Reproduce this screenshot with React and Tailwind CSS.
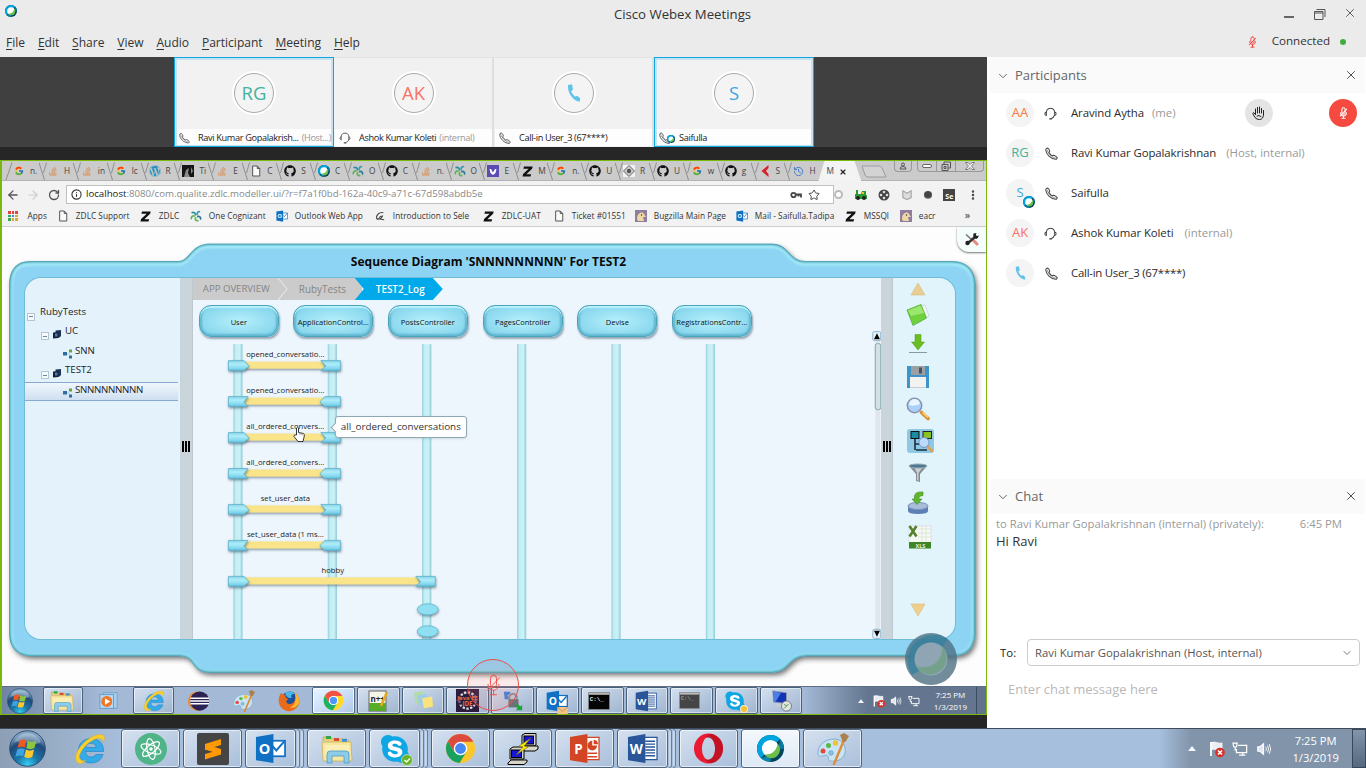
import React from "react";
import { FcGoogle } from "react-icons/fc";
import { FaGithub, FaStackOverflow, FaWordpress, FaSkype } from "react-icons/fa";
import { X, Star, ArrowLeft, ArrowRight, RotateCw, Info, ChevronDown, MoreVertical, History } from "lucide-react";

/* ---------- small glyphs ---------- */

const Webex = ({ className }) => (
  <svg viewBox="0 0 24 24" className={className}>
    <circle cx="12" cy="12" r="12" fill="#04435c" />
    <path d="M3.5 20.5A12 12 0 0 1 20.5 3.5L12 12Z" fill="#00a5df" />
    <path d="M20.5 3.5A12 12 0 0 1 24 12L19 13Z" fill="#067aa3" />
    <path d="M3.5 20.5A12 12 0 0 0 12 24L12 18Z" fill="#0a86ad" />
    <circle cx="12" cy="12" r="7.6" fill="#fff" />
    <path d="M18.2 7.6A7.6 7.6 0 1 1 6.6 17.3C13.5 17.8 17.8 13.5 18.2 7.6Z" fill="#6cc04a" />
  </svg>
);

const PhoneLine = ({ className }) => (
  <svg viewBox="0 0 14 14" className={className} fill="none" stroke="currentColor" strokeWidth="1.1" strokeLinejoin="round">
    <path d="M1 2 2.800 1C4 2 4.900 3.300 5.100 4.600L4.200 5.800C5 7.200 6.500 8.700 7.900 9.500L9.300 8.900C10.800 9.300 12.200 10.200 13.200 11.500L12.300 13.200C7 13.800 0 7.500 1 2Z" />
    <path d="M2.200 2.800C2.800 6.500 7.500 11.300 11.500 11.900" strokeWidth=".6" />
  </svg>
);

const PhoneSolid = ({ className }) => (
  <svg viewBox="0 0 14 18" className={className} fill="#62c3ea">
    <path d="M1 1 5 .3 6 5.500 4.200 7.200C5 9.300 6.200 10.900 7.900 12.400L10.500 11.900 13.300 14.500 12.500 17.700C5.500 16.500.300 8.500 1 1Z" />
  </svg>
);

const Headset = ({ className }) => (
  <svg viewBox="0 0 14 14" className={className} fill="none" stroke="currentColor" strokeWidth="1.1" strokeLinecap="round">
    <path d="M2.600 8.500C1.700 4 3.700 1.300 7 1.300S12.300 4 11.400 8.500C10.800 10.800 9.500 12 7.500 12.600" />
    <path d="M2.500 5.700C.700 5.500.300 8.900 2.600 9.200M11.500 5.700C13.300 5.500 13.700 8.900 11.400 9.200" />
    <path d="M6.200 12.800H7.800" strokeWidth="1.500" />
  </svg>
);

const MicOff = ({ className, w = 1.2 }) => (
  <svg viewBox="0 0 14 18" className={className} fill="none" stroke="currentColor" strokeWidth={w} strokeLinecap="round">
    <rect x="4.500" y="1" width="5" height="10" rx="2.500" />
    <path d="M2.500 8.500C2.500 15 11.500 15 11.500 8.500M7 13.500V17M4.500 17H9.500M12 3 2 13.500" />
  </svg>
);

const Palm = ({ className }) => (
  <svg viewBox="0 0 14 14" className={className} fill="none" stroke="currentColor" strokeWidth="1" strokeLinecap="round" strokeLinejoin="round">
    <path d="M3.500 8.500V3M5.500 7V1.500M7.500 7V1M9.500 7V2.500M11.500 8V4.500M3.500 8.500 1.500 6.500Q.500 7 1 8L3 11.500Q4.500 13.500 7.500 13.500 11.500 13.500 11.500 8M5 10Q7 8.500 9 10.500" />
  </svg>
);

const Doc = ({ className }) => (
  <svg viewBox="0 0 12 14" className={className} fill="#fafafa" stroke="#555" strokeWidth="1.200">
    <path d="M2 1H7.500L10.500 4V13H2ZM7.500 1V4H10.500" />
  </svg>
);

const ZMark = ({ className }) => (
  <svg viewBox="0 0 12 12" className={className}>
    <path d="M2.200.5H11.700L11 3 4.800 9H10L9.300 11.500H.5L1.200 8.800 7.300 3H1.500Z" fill="#111" />
  </svg>
);

const Swirl = ({ className }) => (
  <svg viewBox="0 0 14 14" className={className} fill="none" strokeWidth="2" strokeLinecap="round">
    <path d="M6.500 5.500C6 3.500 4.500 2.500 2.500 3" stroke="#2f8dab" />
    <path d="M8.500 5.500C8 3.500 9 1.800 11 1.800" stroke="#35a2b0" />
    <path d="M5 7C3 6.500 1.500 8 1.500 10" stroke="#5ab554" />
    <path d="M6.500 9C5.500 11 7 12.700 9 12.500" stroke="#5ab554" />
    <path d="M9 7.800C11 7 12.700 8.500 12.300 10.500" stroke="#2b7898" />
  </svg>
);

const Outlook = ({ className }) => (
  <svg viewBox="0 0 32 32" className={className}>
    <rect x="13" y="8" width="18" height="16" fill="#fff" stroke="#0f70c4" strokeWidth="1.800" />
    <path d="M14 9 22 18 30 9" fill="none" stroke="#0f70c4" strokeWidth="2" />
    <path d="M1 4 19 1V31L1 28Z" fill="#0f70c4" />
    <text x="9.800" y="21.500" textAnchor="middle" fontSize="15" fontWeight="700" fontFamily="Open Sans" fill="#fff">O</text>
  </svg>
);

const Office = ({ className, letter, color }) => (
  <svg viewBox="0 0 32 32" className={className}>
    <rect x="15" y="4.500" width="16" height="23" fill="#fff" stroke={color} strokeWidth="1.300" />
    {letter === "W" ? (
      <path d="M19 8.500H29M19 11.500H29M19 14.500H29M19 17.500H29M19 20.500H29M19 23.500H29" stroke={color} strokeWidth="1.400" />
    ) : (
      <g>
        <path d="M24 8A5 5 0 1 0 29 13H24Z" fill={color} />
        <path d="M25.500 7A5 5 0 0 1 30 11.500H25.500Z" fill={color} />
        <path d="M19 21H29M19 24.500H29" stroke={color} strokeWidth="1.500" />
      </g>
    )}
    <path d="M1 4 19 1V31L1 28Z" fill={color} />
    <text x="9.700" y="21.500" textAnchor="middle" fontSize="14" fontWeight="700" fontFamily="Open Sans" fill="#fff">{letter}</text>
  </svg>
);

const Chrome = ({ className }) => (
  <svg viewBox="0 0 32 32" className={className}>
    <circle cx="16" cy="16" r="15" fill="#fbc629" />
    <path d="M3 8.500A15 15 0 0 0 15 31L22 19.500 16 16 9.500 19.500Z" fill="#1aa15f" />
    <path d="M3 8.500A15 15 0 0 1 29 8.500L29.300 9H16L9.500 19.500Z" fill="#dd4b3e" />
    <circle cx="16" cy="16" r="7" fill="#fff" />
    <circle cx="16" cy="16" r="5.600" fill="#4688f1" />
  </svg>
);

const Orb = ({ className }) => (
  <svg viewBox="0 0 36 36" className={className}>
    <defs>
      <radialGradient id="orb" cx="50%" cy="95%" r="85%">
        <stop offset="0" stopColor="#35d0f2" />
        <stop offset=".35" stopColor="#1b78ab" />
        <stop offset=".75" stopColor="#1f4a78" />
        <stop offset="1" stopColor="#7fa3c4" />
      </radialGradient>
    </defs>
    <circle cx="18" cy="18" r="17.300" fill="url(#orb)" stroke="#23415f" strokeWidth=".8" />
    <path d="M5 12A14 14 0 0 1 31 12C23 17 13 9 5 12Z" fill="#fff" opacity=".3" />
    <path d="M10 10.500C13 8.500 15 9 17 10L15.500 17C13 16 11 16 8.300 17.500Z" fill="#ee5a24" />
    <path d="M18.300 10.500C21 12 23.500 12 26.500 10.500L24.800 17.500C22 19 19.500 19 16.800 17.500Z" fill="#8cc63e" />
    <path d="M8 19C10.500 17.500 13 17.500 15.300 18.600L13.600 25.500C11 24.300 9 24.500 6.300 26Z" fill="#3fa3e2" />
    <path d="M16.500 19C19 20.500 21.500 20.500 24.400 19L22.700 26C20 27.600 17.500 27.500 14.800 26Z" fill="#fdc82b" />
  </svg>
);

const Explorer = ({ className }) => (
  <svg viewBox="0 0 32 32" className={className}>
    <path d="M2 8V4H10L12 6H26L28 8V10" fill="#e9cf72" stroke="#b89a3e" strokeWidth=".6" />
    <rect x="5" y="3" width="5" height="3" fill="#2ea84a" />
    <rect x="13" y="5" width="5" height="3" fill="#d74d34" />
    <rect x="21" y="6" width="5" height="3" fill="#3b8edb" />
    <path d="M1 9H30L31 28H2Z" fill="#f7e6a0" stroke="#c9a94b" strokeWidth=".7" />
    <path d="M4 12H28V22H4Z" fill="#fdf2bd" opacity=".7" />
    <path d="M6 30V21Q6 18 9 18H25Q28 18 28 21V30H23V23H11V30Z" fill="#8ecbe9" stroke="#4b9cc6" strokeWidth=".8" />
  </svg>
);

const IE = ({ className }) => (
  <svg viewBox="0 0 32 32" className={className}>
    <path d="M29.500 18.500H11.500C11.800 22 14 24 17 24 19.200 24 20.800 23 21.700 21.500H29C27.500 26.800 23 30 17 30 9.500 30 4.300 25 4.300 17.800 4.300 10.500 9.500 5.500 17 5.500 25 5.500 30 10.800 29.500 18.500ZM11.700 14.500H22.200C21.800 11.800 19.800 10.300 17 10.300S12.300 11.800 11.700 14.500Z" fill="#35aae8" stroke="#1a7fc0" strokeWidth=".6" />
    <path d="M5.500 30.500C-3 28 4 12 16 5 24 .300 31 .500 30.500 5.500 30.300 7 29.800 8.300 29.200 9.500 29 4.500 24 4 17.500 8 8 14 3 24 6.500 27 8 28.200 10 27.800 12 27 9.500 29.500 7.500 31 5.500 30.500Z" fill="#f8cf2c" stroke="#d9a514" strokeWidth=".4" />
  </svg>
);

const Palette = ({ className }) => (
  <svg viewBox="0 0 32 32" className={className}>
    <path d="M1 20C1 11 9 6 18 6 27 7 29 14 28 20 26 27 19 29 13 28 10 26 13 23 9 22 5 23 1 25 1 20Z" fill="#c9e4f4" stroke="#7fb0d1" />
    <circle cx="6" cy="18" r="2.500" fill="#e5483c" />
    <circle cx="11.500" cy="12.500" r="2.500" fill="#59b947" />
    <circle cx="18.500" cy="10" r="2.700" fill="#f2c230" />
    <circle cx="14" cy="20" r="2.300" fill="#8fc1e0" stroke="#5a97c0" strokeWidth=".6" />
    <path d="M27 7 17 31" stroke="#df8b35" strokeWidth="2.400" strokeLinecap="round" />
    <path d="M23 2 27 0 32 3 28.500 9 25.500 8Z" fill="#a9804f" />
  </svg>
);

const SkypeIcon = ({ className, children }) => (
  <span className={`relative inline-block ${className}`}>
    <span className="absolute inset-[20%] rounded-full bg-white" />
    <FaSkype className="relative h-full w-full text-[#0fa6e6]" />
    {children}
  </span>
);

const Terminal = ({ className, fill = "#050505", ink = "#eee" }) => (
  <svg viewBox="0 0 32 26" className={className}>
    <rect x=".500" y=".500" width="31" height="25" fill={fill} stroke="#999" />
    <rect x="1" y="1" width="30" height="3" fill="#b8b8b8" />
    <text x="2.500" y="12.500" fontSize="8.500" fontFamily="Liberation Mono" fontWeight="700" fill={ink}>C:\_</text>
  </svg>
);

const Firefox = ({ className }) => (
  <svg viewBox="0 0 32 32" className={className}>
    <circle cx="17" cy="14" r="12" fill="#1d4f9c" />
    <path d="M10 4C15 1 22 2 25 6 20 5 18 8 20 11 17 13 12 11 10 4Z" fill="#4bb6e8" />
    <path d="M1 15C1 10 3 6 5 4 6 7 8 7 11 7 10 10 12 12 15 13 13 15 11 16 13 19 17 22 22 20 24 16 26 12 26 8 24 4 30 8 32 14 31 19 28 28 21 31 15 31 7 30 1 24 1 15Z" fill="#e86a1c" />
    <path d="M24 4C30 8 32 15 30 20 27 26 21 27 17 25 24 24 28 14 24 4Z" fill="#fbb72a" />
  </svg>
);

const Atom = ({ className }) => (
  <svg viewBox="0 0 32 32" className={className}>
    <circle cx="16" cy="16" r="16" fill="#4fb487" />
    <g fill="none" stroke="#fff" strokeWidth="1.200">
      <ellipse cx="16" cy="16" rx="10.500" ry="4" transform="rotate(20 16 16)" />
      <ellipse cx="16" cy="16" rx="10.500" ry="4" transform="rotate(80 16 16)" />
      <ellipse cx="16" cy="16" rx="10.500" ry="4" transform="rotate(140 16 16)" />
    </g>
    <circle cx="16" cy="16" r="1.800" fill="#fff" />
  </svg>
);

const Sublime = ({ className }) => (
  <svg viewBox="0 0 32 32" className={className}>
    <rect width="32" height="32" rx="2" fill="#454545" />
    <path d="M8 11 24 6V12L8 17ZM8 11 24 16V21.500L8 16.500ZM8 21 24 16.500V21.500L8 26.500Z" fill="#ff9a06" />
  </svg>
);

const Putty = ({ className }) => (
  <svg viewBox="0 0 32 32" className={className}>
    <g stroke="#000" strokeWidth="1">
      <path d="M15 2 18 .500H29V12L27 13H15Z" fill="#d8d4c8" />
      <rect x="17" y="3" width="9.500" height="8" fill="#1616d8" />
      <path d="M13 16 16 13H31V16L28 18H13Z" fill="#d8d4c8" />
      <path d="M3 16 6 14H17V26H3Z" fill="#d8d4c8" />
      <rect x="4.500" y="17" width="10" height="7.500" fill="#1616d8" />
      <path d="M1 30 4 27H20V29L17 31.500H1Z" fill="#d8d4c8" />
    </g>
    <path d="M24 5 12 13 16 14 9 22 21 14 17 13Z" fill="#ffe900" stroke="#6d6400" strokeWidth=".5" />
  </svg>
);

const Opera = ({ className }) => (
  <svg viewBox="0 0 32 32" className={className}>
    <g fillRule="evenodd">
      <path d="M16 .500A15 15.500 0 1 0 16 31.500A15 15.500 0 1 0 16 .500ZM16 4.200A6.800 11.800 0 1 1 16 27.800A6.800 11.800 0 1 1 16 4.200Z" fill="#ea1b32" />
      <path d="M20 1C28 4 31 9 31 16 31 23 27 29 20 31 17 31.500 14 29.500 12.500 27 20 29.500 23 22 22.800 16 23 9 19 3 12.500 5 14 2.500 17 .500 20 1Z" fill="#b5101f" opacity=".75" />
    </g>
  </svg>
);

const Eclipse = ({ className }) => (
  <svg viewBox="0 0 32 32" className={className}>
    <circle cx="14" cy="16" r="14" fill="#f08a28" />
    <circle cx="17" cy="16" r="14" fill="#2c2255" />
    <path d="M3.500 12H30.500M3 16H31M3.500 20H30.500" stroke="#fff" strokeWidth="1.900" />
  </svg>
);

/* ---------- webex top bar ---------- */

const menu = ["File", "Edit", "Share", "View", "Audio", "Participant", "Meeting", "Help"];

function TitleBar() {
  return (
    <header className="flex h-[57px] flex-col bg-[#ebebeb] text-[#333]">
      <div className="grid h-7 grid-cols-3 items-center">
        <Webex className="mb-1.5 ml-[5px] h-3 w-3" />
        <h1 className="pt-px pr-px text-center text-[13.200px]">Cisco Webex Meetings</h1>
        <div className="flex items-center justify-end pr-[9px] text-[#555]">
          <span className="mt-1.5 mr-5 h-0.5 w-2.5 bg-[#666]" />
          <svg viewBox="0 0 12 12" className="mr-[17px] h-3 w-3" fill="none" stroke="#555"><path d="M.500 3.500H9V11.500H.500ZM.500 5H9M2.500 1.500H11V9" /></svg>
          <X className="h-3.5 w-3.5 -translate-y-px" strokeWidth={1.600} />
        </div>
      </div>
      <div className="flex h-[29px] items-center justify-between pr-5 pl-1.5">
        <nav className="flex gap-[12.800px] pt-0.5 text-[12.050px]">
          {menu.map((m) => (
            <span key={m}><span className="underline underline-offset-2">{m[0]}</span>{m.slice(1)}</span>
          ))}
        </nav>
        <div className="flex items-center pb-[3px] text-[11.600px]">
          <MicOff className="mt-0.5 mr-[15px] h-3 w-[9px] text-[#f0483e]" w={1.500} />
          Connected
          <span className="mt-0.5 ml-2.5 h-1.5 w-1.5 rounded-full bg-[#3fae3c]" />
        </div>
      </div>
    </header>
  );
}

/* ---------- video strip ---------- */

const tiles = [
  { face: <span className="text-[#43b39e]">RG</span>, name: "Ravi Kumar Gopalakrish...", note: "(Host...)", active: true, icon: "phone" },
  { face: <span className="text-[#fa7267]">AK</span>, name: "Ashok Kumar Koleti", note: "(internal)", icon: "headset" },
  { face: <PhoneSolid className="h-[18px] w-3.5" />, name: "Call-in User_3 (67****)", icon: "phone" },
  { face: <span className="text-[#3ba8dc]">S</span>, name: "Saifulla", active: true, icon: "phone", badge: true },
];

function VideoStrip() {
  return (
    <div className="flex h-[90px] bg-[#404040] pl-[174px]">
      {tiles.map((t) => (
        <div key={t.name} className={`flex w-40 flex-col border ${t.active ? "border-[#12a5e0] bg-[#f2f2f2] shadow-[inset_0_0_0_2px_#c4e3f0]" : "border-r-2 border-transparent border-t-[#e2e2e2] border-r-[#dedede] bg-[#f1f1f1]"}`}>
          <div className="flex flex-1 items-center justify-center">
            <span className="mb-px flex h-10 w-10 items-center justify-center rounded-full border border-[#aaa] bg-[#f4f4f4] text-[18.500px] shadow-[0_0_0_2px_#fff]">{t.face}</span>
          </div>
          <div className={`relative flex items-center bg-white/85 text-[9.200px] tracking-[-0.36px] whitespace-nowrap text-[#222] ${t.active ? "mx-0.5 mb-px h-4 pt-px pl-0.5" : "h-[17px] pt-px pl-1"}`}>
            {t.icon === "phone" ? <PhoneLine className="h-3 w-3 text-[#555]" /> : <Headset className="h-3 w-3 text-[#555]" />}
            {t.badge && <Webex className="absolute top-1.5 left-2.5 h-2 w-2" />}
            <span className="pl-2">{t.name}</span>
            {t.note && <span className="pl-[3px] text-[#999]">{t.note}</span>}
          </div>
        </div>
      ))}
    </div>
  );
}

/* ---------- shared browser ---------- */

const fav = {
  g: <FcGoogle className="h-2.5 w-2.5" />,
  so: <FaStackOverflow className="h-2.5 w-2.5 text-[#d98e55]" />,
  wp: <FaWordpress className="h-3 w-3 text-[#2591bd]" />,
  gh: <FaGithub className="h-3 w-3 text-[#111]" />,
  doc: <Doc className="h-3 w-2.5" />,
  cog: <Swirl className="h-3 w-3" />,
  webex: <Webex className="h-3 w-3" />,
  z: <ZMark className="h-[11px] w-[11px]" />,
  face: <svg viewBox="0 0 12 12" className="h-3 w-3"><rect width="12" height="12" fill="#151515" /><path d="M2 12 4 5 7 3 6 8 8 12ZM9 2 11 6 9 9Z" fill="#8b8b8b" /></svg>,
  pur: <svg viewBox="0 0 12 12" className="h-3 w-3"><rect width="12" height="12" fill="#5b4bb3" /><path d="M2.500 4 9.500 4 8.500 8 6 10 3.500 8Z" fill="#fff" /><path d="M4 4 6 7.500 8 4Z" fill="#5b4bb3" /></svg>,
  dia: <svg viewBox="0 0 12 12" className="h-3 w-3"><rect width="12" height="12" fill="#f2f2f2" /><path d="M6 .500 11.500 6 6 11.500.500 6Z" fill="#ccc" stroke="#666" /><circle cx="6" cy="6" r="2.200" fill="#555" /></svg>,
  red: <svg viewBox="0 0 12 12" className="h-3 w-3"><path d="M9.500 0 2.500 6 9.500 12V9L7 6 9.500 3Z" fill="#d8232f" /></svg>,
  hist: <History className="h-[11px] w-[11px] text-[#3f78c8]" />,
};

const tabs = [
  ["g", "n."], ["so", "H"], ["so", "in"], ["g", "lc"], ["wp", "R"], ["face", "Ti"], ["so", "E"], ["doc", "C"],
  ["gh", "S"], ["webex", "C"], ["cog", "O"], ["gh", "C"], ["so", "n."], ["cog", "O"], ["pur", "E"], ["z", "M"],
  ["g", "n."], ["gh", "U"], ["dia", "R"], ["gh", "U"], ["g", "w"], ["gh", "g"], ["red", "S"], ["hist", "H"],
];

function TabStrip() {
  return (
    <div className="flex h-5 border-b border-[#b3b3b3] bg-[#cbcbcb] pl-[3px] text-[8.300px] text-[#444]">
      {tabs.map(([icon, label], i) => (
        <div key={i} className="flex w-[33.900px] items-center pt-px">
          <svg viewBox="0 0 8 20" className="h-5 w-2 shrink-0" fill="none" stroke="#8f8f8f" strokeWidth="1">
            {i === 0 ? <path d="M1 19 7 1.500" /> : <path d="M0 1.500 5.500 19M4.500 12 7.500 1.500" />}
          </svg>
          <span className="flex w-3 shrink-0 justify-center">{fav[icon]}</span>
          <span className="w-3 pl-[5px] whitespace-nowrap">{label}</span>
        </div>
      ))}
      <div className="flex h-5 w-[43px] shrink-0 items-center gap-[5px] bg-[#f3f3f3] pt-px pl-2 [clip-path:polygon(0_100%,14%_0,84%_0,100%_100%)]">
        M<X className="h-2 w-2 text-[#222]" strokeWidth={3.500} />
      </div>
      <svg viewBox="0 0 26 14" className="mt-1 h-3.5 w-[26px]"><path d="M1 1H18Q20 1 21 3L25 12H7Q5 12 4 10Z" fill="#d3d3d3" stroke="#9c9c9c" /></svg>
      <div className="ml-auto flex h-[11px] gap-[5px] pr-0.5 text-[#666]">
        <div className="flex w-[18px] items-center justify-center rounded-b border border-t-0 border-[#999]">
          <svg viewBox="0 0 8 8" className="h-2 w-2" fill="none" stroke="#555"><circle cx="4" cy="2.500" r="1.500" /><path d="M1 7Q1 4.500 4 4.500T7 7Z" /></svg>
        </div>
        <div className="flex w-[67px] rounded-b border border-t-0 border-[#999]">
          <span className="flex flex-1 items-center justify-center border-r border-[#999]"><span className="h-1 w-2.5 rounded-xs border border-[#666] bg-white" /></span>
          <span className="flex flex-1 items-center justify-center border-r border-[#999]">
            <svg viewBox="0 0 10 10" className="h-2.5 w-2.5" fill="none" stroke="#555"><path d="M1 3.500H7V9.500H1ZM3 3V1H9.500V7H7.500M3 5.500H5V7.500H3Z" /></svg>
          </span>
          <span className="flex w-[27px] items-center justify-center">
            <svg viewBox="0 0 10 8" className="h-2 w-2.5" fill="#f4f4f4" stroke="#666" strokeWidth=".8"><path d="M.500.500H3L5 2.500 7 .500H9.500L6.500 4 9.500 7.500H7L5 5.500 3 7.500H.500L3.500 4Z" /></svg>
          </span>
        </div>
      </div>
    </div>
  );
}

const bookmarks = [
  ["doc", "ZDLC Support", "w-[83px]"], ["z", "ZDLC", "w-[50px]"], ["cog", "One Cognizant", "w-[86px]"],
  ["out", "Outlook Web App", "w-[98px]"], ["intro", "Introduction to Sele", "w-[109px]"], ["z", "ZDLC-UAT", "w-[70px]"],
  ["doc", "Ticket #01551", "w-[82px]"], ["bug", "Bugzilla Main Page", "w-[101px]"], ["out", "Mail - Saifulla.Tadipa", "w-[109px]"],
  ["z", "MSSQl", "w-[55px]"], ["bug", "eacr", "w-[60px]"],
];

const markIcon = {
  ...fav,
  out: <Outlook className="h-3 w-3" />,
  intro: <svg viewBox="0 0 12 12" className="h-2.5 w-2.5" fill="none" stroke="#444" strokeWidth="1.300"><path d="M10 2C5 1 1 5 2 9 4 11 8 9 9 6 6 6 5 8 5 8M2 9 11 10.500" /></svg>,
  bug: <svg viewBox="0 0 12 12" className="h-3 w-3"><rect width="12" height="12" fill="#927da0" /><path d="M2 9C2 3 7 1 9 4L11 7 8 7 9 11 3 11Z" fill="#ead9a4" /><circle cx="6.500" cy="5" r=".7" fill="#333" /></svg>,
};

const appDots = ["bg-[#e2453c]", "bg-[#e2453c]", "bg-[#e2453c]", "bg-[#34a853]", "bg-[#4285f4]", "bg-[#e8a72f]", "bg-[#34a853]", "bg-[#e8a72f]", "bg-[#e8a72f]"];

function BrowserBars() {
  return (
    <>
      <div className="flex h-[25px] items-center bg-[#f2f2f2] pt-0.5 pr-[7px] text-[#555]">
        <ArrowLeft className="ml-1 h-3.5 w-3.5" strokeWidth={2.200} />
        <ArrowRight className="ml-1.5 h-3.5 w-3.5 text-[#ccc]" />
        <RotateCw className="ml-2 h-3 w-3" strokeWidth={2.600} />
        <div className="ml-1.5 flex h-[19px] w-[768px] items-center border border-[#c0c0c0] bg-white pr-[13px] pl-1 text-[9.660px] text-[#888]">
          <Info className="mr-1 h-[11px] w-[11px] text-[#333]" strokeWidth={2.400} />
          <span className="flex-1 whitespace-nowrap"><span className="text-[#222]">localhost</span>:8080/com.qualite.zdlc.modeller.ui/?r=f7a1f0bd-162a-40c9-a71c-67d598abdb5e</span>
          <svg viewBox="0 0 12 8" className="h-2 w-3" fill="none" stroke="#444" strokeWidth="1.800"><circle cx="3.500" cy="4" r="2.200" /><path d="M6 3.500H11V6.500M8.500 3.500V5.500" /></svg>
          <Star className="ml-1.5 h-3 w-3 text-[#444]" strokeWidth={2} />
        </div>
        <div className="flex flex-1 items-center justify-between">
          <span className="h-[9px] w-[9px] rounded-full border-2 border-[#bbb] bg-white" />
          <svg viewBox="0 0 12 10" className="h-2.5 w-3"><path d="M1 0H3V4H6L7 1H11V5H12V9H0V4H1Z" fill="#2b9a34" /><circle cx="3" cy="8" r="2" fill="#222" /><circle cx="9" cy="8" r="2" fill="#222" /><path d="M7 2H9V4H7Z" fill="#e8c92d" /></svg>
          <svg viewBox="0 0 12 12" className="h-3 w-3"><circle cx="6" cy="6" r="5.500" fill="#444" /><circle cx="6" cy="3" r="1.300" fill="#ddd" /><circle cx="3" cy="6" r="1.300" fill="#ddd" /><circle cx="9" cy="6" r="1.300" fill="#ddd" /><circle cx="6" cy="9" r="1.300" fill="#ddd" /></svg>
          <svg viewBox="0 0 12 12" className="h-2.5 w-2.5" fill="#ddd" stroke="#aaa" strokeWidth="1.500"><path d="M1 1 6 4 11 1V9L6 11.500 1 9Z" /></svg>
          <span className="h-2 w-2 rounded-full border-b border-[#999] bg-[#444]" />
          <span className="flex h-3 w-3 items-end justify-center bg-[#444] text-[7px] leading-[8px] font-bold text-white">Se</span>
          <MoreVertical className="h-3 w-3 text-[#444]" strokeWidth={3} />
        </div>
      </div>
      <div className="flex h-[21px] items-center border-b border-[#cfcfcf] bg-[#f2f2f2] pl-1.5 text-[8.300px] text-[#333]">
        <span className="mr-2.5 grid grid-cols-3 gap-px">
          {appDots.map((c, i) => <i key={i} className={`h-[2.500px] w-[2.500px] ${c}`} />)}
        </span>
        <span className="mr-2.5">Apps</span>
        {bookmarks.map(([icon, label, w]) => (
          <span key={label} className={`flex shrink-0 items-center whitespace-nowrap ${w}`}>
            <span className="flex w-3 shrink-0 justify-center">{markIcon[icon]}</span>
            <span className="pl-[7px]">{label}</span>
          </span>
        ))}
        <span className="mb-1 ml-[5px] text-[11px] leading-none">»</span>
      </div>
    </>
  );
}

/* ---------- modeller application ---------- */

const Frame = () => (
  <svg viewBox="2 227 984 459" className="absolute inset-0 h-full w-full">
    <defs>
      <filter id="soft" x="-5%" y="-5%" width="110%" height="115%"><feDropShadow dx="2" dy="3" stdDeviation="2.500" floodColor="#333" floodOpacity=".65" /></filter>
      <filter id="blurEdge"><feGaussianBlur stdDeviation="1.200" /></filter>
      <clipPath id="frameClip"><path id="framePath" d="M29 261.500H178C190 261.500 190 244 210 244H772C790 244 788 261.500 806 261.500H952Q974 261.500 975 284V634Q974 656 952 656H806C788 656 790 672.500 772 672.500H210C190 672.500 196 656 180 656H31Q10 655 9.500 634V284Q10 262 29 261.500Z" /></clipPath>
    </defs>
    <use href="#framePath" fill="#8dd4f4" filter="url(#soft)" />
    <g clipPath="url(#frameClip)">
      <use href="#framePath" fill="none" stroke="#a9eefa" strokeWidth="6" filter="url(#blurEdge)" transform="translate(0 1)" />
      <use href="#framePath" fill="none" stroke="#3a97ab" strokeWidth="2.200" filter="url(#blurEdge)" />
    </g>
    <use href="#framePath" fill="none" stroke="#4a9db0" strokeWidth=".8" />
  </svg>
);

const Minus = () => (
  <span className="mt-2 flex h-2 w-2 items-center justify-center border border-[#b4c6d2] bg-[#f4fafd]"><i className="h-px w-1 bg-[#6a8aa0]" /></span>
);
const Pkg = () => (
  <svg viewBox="0 0 10 10" className="mt-1 h-2.5 w-2.5"><path d="M3.500 1.500 9 1V7L7.500 8.500 3.500 9Z" fill="#1c3358" /><path d="M1 3.500 6.500 3V9L1 9.500Z" fill="#13233f" /><path d="M3 4.500H5.500V7.500H3Z" fill="#5878a4" /></svg>
);
const Flow = () => (
  <svg viewBox="0 0 10 10" className="mt-1 h-2.5 w-2.5"><rect y="3" width="4" height="3.500" fill="#2d6f9e" /><rect x="6" y=".5" width="3" height="3" fill="#65a537" /><rect x="6" y="6.500" width="3" height="3" fill="#2d6f9e" /><path d="M4 5H7" stroke="#a6cad6" /></svg>
);

const tree = [
  ["RubyTests", "pl-[2px] gap-[5px]", <Minus />],
  ["UC", "pl-[16px] gap-[3px]", <><Minus /><Pkg /></>],
  ["SNN", "pl-[38px] gap-[2px]", <Flow />],
  ["TEST2", "pl-[16px] gap-[3px]", <><Minus /><Pkg /></>],
  ["SNNNNNNNNN", "pl-[38px] gap-[2px] tracking-[-0.300px]", <Flow />],
];

function Tree() {
  return (
    <div className="w-[155px] bg-[#e4f2fb] pt-[25.500px] text-[9.700px] text-[#222]">
      {tree.map(([label, cls, icon], i) => (
        <div key={i} className={`flex h-[19.500px] w-[153px] items-center pb-px ${cls} ${i === 4 ? "border-y border-[#88a9cf] bg-linear-to-b from-[#f0f7fd] to-[#cfdff1]" : ""}`}>
          {icon}
          <span className="-mt-px">{label}</span>
        </div>
      ))}
    </div>
  );
}

const Splitter = ({ className }) => (
  <div className={`flex items-center justify-center gap-px border-r border-[#bdc9cf] bg-[#c9d5db] pb-6 ${className}`}>
    <i className="h-[11px] w-0.5 bg-black" /><i className="h-[11px] w-0.5 bg-black" /><i className="h-[11px] w-0.5 bg-black" />
  </div>
);

const lanes = [
  [199, "User"], [293.5, "ApplicationControl..."], [388, "PostsController"],
  [483, "PagesController"], [577.5, "Devise"], [672, "RegistrationsContr..."],
];
const calls = [
  [366, "opened_conversatio...", false, 1], [402, "opened_conversatio...", true, 1], [438, "all_ordered_convers...", false, 1],
  [474, "all_ordered_convers...", true, 1], [510, "set_user_data", false, 1], [546, "set_user_data (1 ms...", true, 1], [582, "hobby", false, 2],
];

function Diagram() {
  return (
    <div className="relative w-[689px] overflow-hidden bg-[#eef6fd]">
      <div className="flex h-[22px] text-[9.900px] text-[#858585]">
        <div className="flex w-[169px] bg-[#cbcbcb]">
          <span className="flex w-[91px] items-center pl-2.5 text-[9.600px]">APP OVERVIEW</span>
          <svg viewBox="0 0 10 22" className="-ml-1.5 h-[22px] w-2.5" fill="none" stroke="#eee"><path d="M0 0 9 11 0 22" /></svg>
          <span className="flex items-center pl-[11px]">RubyTests</span>
        </div>
        <div className="-ml-[7px] flex w-[88px] items-center bg-[#00a9ea] pl-[21px] text-[9.900px] font-semibold text-white [clip-path:polygon(0_0,78px_0,100%_50%,78px_100%,0_100%,9px_50%)]">TEST2_Log</div>
      </div>
      <svg viewBox="193 278 689 361" className="absolute inset-0 h-full w-full">
        <defs>
          <linearGradient id="life"><stop offset="0" stopColor="#93cfdc" /><stop offset=".25" stopColor="#c4eef5" /><stop offset=".7" stopColor="#caf1f6" /><stop offset="1" stopColor="#8ec9d6" /></linearGradient>
          <linearGradient id="plug" x2="0" y2="1"><stop offset="0" stopColor="#86d3e8" /><stop offset=".35" stopColor="#aeedf9" /><stop offset=".75" stopColor="#86d9f0" /><stop offset="1" stopColor="#62bcd8" /></linearGradient>
          <filter id="drop" x="-10%" y="-50%" width="120%" height="250%"><feDropShadow dx=".5" dy="1.500" stdDeviation=".8" floodColor="#345" floodOpacity=".55" /></filter>
        </defs>
        {lanes.map(([x]) => <rect key={x} x={x + 34.4} y="344" width="9.200" height="296" fill="url(#life)" />)}
        {calls.map(([y, , back, span]) => {
          const r = 320 + (span - 1) * 95;
          return (
            <g key={y}>
              <g filter="url(#drop)"><rect x="243" y={y - 4.5} width={r - 239} height="7" fill="#fae48a" /></g>
              <g fill="url(#plug)" stroke="#58adc6" strokeWidth=".7" filter="url(#drop)">
                <path d={back ? `M228.500 ${y - 5.5}H248L244 ${y}L248 ${y + 4.5}H228.500Z` : `M228.500 ${y - 5.5}H244L249 ${y}L244 ${y + 4.5}H228.500Z`} />
                <path d={back ? `M${r + 20.5} ${y - 5.5}H${r + 5}L${r} ${y}L${r + 5} ${y + 4.5}H${r + 20.5}Z` : `M${r + 20.5} ${y - 5.5}H${r + 1}L${r + 6} ${y}L${r + 1} ${y + 4.5}H${r + 20.5}Z`} />
              </g>
            </g>
          );
        })}
        <g fill="#8fdff2" stroke="#5fb5cc" strokeWidth=".8" filter="url(#drop)"><ellipse cx="428" cy="609.500" rx="10.500" ry="5.500" /><ellipse cx="428" cy="631.500" rx="10.500" ry="5.500" /></g>
        <rect x="876" y="341" width="5" height="298" fill="#dfe6ec" />
        <rect x="876" y="343.500" width="5.500" height="66" rx="2" fill="#d3e0e5" stroke="#7fa9ab" />
        <g fill="#e6f2fa" stroke="#8fb6cd"><rect x="873.500" y="331.500" width="8" height="9" rx="1.500" /><rect x="873.500" y="629.500" width="8" height="9" rx="1.500" /></g>
        <path d="M877.700 333 880.700 339H874.700ZM874.700 631H880.700L877.700 637Z" fill="#000" />
      </svg>
      {lanes.map(([x, label]) => (
        <div key={label} className="absolute top-[27px] flex h-8 w-20 items-center justify-center rounded-xl border border-[#4aa4bb] bg-radial from-[#b5f0fc] to-[#7bcfe9] pt-[3px] text-[7.500px] whitespace-nowrap text-[#111] shadow-[inset_0_2px_1px_#b9f1fa,inset_0_-2px_2px_#62b8d2,inset_2px_0_2px_#5fb4c9,inset_-2px_0_2px_#5fb4c9,1px_2px_2px_rgba(60,90,110,.5)]" style={{ left: x - 193 }}>{label}</div>
      ))}
      {calls.map(([y, label, , span]) => (
        <div key={y} className="absolute -translate-x-1/2 text-[7.700px] leading-[11px] whitespace-nowrap text-[#222]" style={{ left: 92.5 + (span - 1) * 47.5, top: y - 278 - 17 }}>{label}</div>
      ))}
      <svg viewBox="0 0 12 16" className="absolute top-[148px] left-[100px] z-10 h-4 w-3"><path d="M3.500 9V2Q4.500.300 5.500 2V6.500L10.500 7.500Q11.500 8 11.300 10L10 15.500H5L1 10.500Q.800 8.800 2.200 9Z" fill="#fff" stroke="#222" strokeWidth=".9" /><path d="M7 7V9M9 7.500V9.500" stroke="#666" strokeWidth=".6" /></svg>
      <div className="absolute top-[138px] left-[142px] flex h-[22px] w-[132px] items-center justify-center rounded-[3px] border border-[#8fa8b5] bg-white pb-px text-[9.850px] text-[#333] shadow">
        <i className="absolute top-[7px] -left-[4px] h-[7px] w-[7px] rotate-45 border-b border-l border-[#8fa8b5] bg-white" />
        all_ordered_conversations
      </div>
    </div>
  );
}

function ToolColumn() {
  const s = "h-6 w-6";
  return (
    <div className="flex w-[62px] flex-col items-center bg-[#e1f3fb] pr-3 [&>div]:flex [&>div]:items-center">
      <div className="h-[22px]"><svg viewBox="0 0 16 14" className="h-3.5 w-4"><path d="M8 1 15 13H1Z" fill="#e9cd93" stroke="#d8bd85" strokeWidth=".6" /></svg></div>
      <div className="h-[29px]"><svg viewBox="0 0 24 24" className={s}><path d="M10 3 19 2 23 13 12 20Z" fill="#f3f6f6" stroke="#bbc" strokeWidth=".5" /><path d="M1 7 15 1.500 20.500 15 7 22.500Z" fill="#6fd13b" stroke="#48a82b" strokeWidth=".7" /><path d="M2 7.500 14.500 2.500 18 10 5 13Z" fill="#9be66f" /></svg></div>
      <div className="h-[29px]"><svg viewBox="0 0 20 20" className="h-5 w-5"><path d="M7 .500H13V8H16.500L10 16 3.500 8H7Z" fill="#6bbd22" stroke="#4d9a1a" strokeWidth=".5" /><path d="M1 18.500H19" stroke="#8a98a5" strokeWidth="1" /></svg></div>
      <div className="h-[37px]"><svg viewBox="0 0 24 24" className={s}><path d="M1 1H23V23H1Z" fill="#3e94c6" /><path d="M5 1H19V10H5Z" fill="#9ba0a4" /><path d="M13 2.500H16V8.500H13Z" fill="#4a535a" /><path d="M4 12H20V23H4Z" fill="#f2f2f0" /><path d="M4 22H20V23H4Z" fill="#ccc" /></svg></div>
      <div className="h-[28px]"><svg viewBox="0 0 24 24" className={s}><path d="M15.500 15.500 22 21.500" stroke="#d9902f" strokeWidth="3.600" strokeLinecap="round" /><path d="M16.500 15.500 22 20.500" stroke="#fbd78c" strokeWidth="1.400" /><circle cx="8.500" cy="8.500" r="7.200" fill="#a9cffa" stroke="#8793ad" strokeWidth="1.500" /><path d="M3 8A5.500 5.500 0 0 1 14 7Q8 10 3 8Z" fill="#e8f4ff" /></svg></div>
      <div className="h-[36px]">
        <svg viewBox="0 0 27 24" className="h-6 w-[27px] translate-x-0.5 rounded-[3px] bg-[#8fc8e4]">
          <rect x="4" y="2.500" width="8" height="7" fill="#1d8ba0" stroke="#111" /><rect x="16" y="2.500" width="8.500" height="7" fill="#8bc220" stroke="#222" />
          <path d="M8 10V21M8 15H13M9 21H20" stroke="#1b2b38" strokeWidth="1.600" fill="none" />
          <path d="M20 17 25 22" stroke="#e0a04d" strokeWidth="2.500" strokeLinecap="round" /><circle cx="17" cy="13.500" r="5" fill="#bcd9fb" stroke="#6d98ce" />
        </svg>
      </div>
      <div className="h-[27px]"><svg viewBox="0 0 20 20" className="h-5 w-5"><path d="M1 3 8 11V18L12 19V11L19 3Z" fill="#858d93" /><path d="M9 10V17L10.500 18V10L15 4H6Z" fill="#c9cfd3" /><ellipse cx="10" cy="3" rx="9" ry="2" fill="#4b7896" stroke="#9aa8b0" /></svg></div>
      <div className="h-[34px]"><svg viewBox="0 0 22 24" className="h-6 w-[22px]"><path d="M1 15V20Q1 23 11 23T21 20V15Z" fill="#5d7fb4" /><ellipse cx="11" cy="15" rx="10" ry="3.600" fill="#a9bdd9" stroke="#7792bd" /><path d="M16 1Q6 0 7.500 8H5L10 13.500 15 8H12Q11 5 16 4.500Z" fill="#61b62e" stroke="#3f8d1e" strokeWidth=".6" /></svg></div>
      <div className="h-[34px]"><svg viewBox="0 0 24 24" className={`${s} translate-x-0.5`}><rect x="1" y="1" width="22" height="17" fill="#f6f8f3" stroke="#ccd" strokeWidth=".5" /><path d="M10 4H23M10 8H23M10 12H23M14 1V18M18 1V18" stroke="#d5dccd" strokeWidth=".6" /><path d="M1.500 1 8.500 11.500M8.500 1 1.500 11.500" stroke="#55802e" strokeWidth="2.600" /><rect x="1" y="17" width="22" height="6.500" fill="#3e8428" /><text x="12.500" y="22.500" fontSize="5.500" fontWeight="700" textAnchor="middle" fontFamily="Open Sans" fill="#e6f3dc">XLS</text></svg></div>
      <div className="mt-[46px] h-5"><svg viewBox="0 0 16 14" className="h-3.5 w-4"><path d="M8 13 15 1H1Z" fill="#efcf8a" stroke="#d8bd85" strokeWidth=".6" /></svg></div>
    </div>
  );
}

function Modeller() {
  return (
    <div className="relative h-[459px] bg-[#fdfdfd]">
      <Frame />
      <div className="absolute top-0 right-0 flex h-[25px] w-[29px] items-center justify-center rounded-bl-xl bg-[#f4fdfb] shadow-[0_1px_2px_#777]">
        <svg viewBox="0 0 14 14" className="mb-0.5 h-3.5 w-3.5"><path d="M7 7 12 12" stroke="#e38b80" strokeWidth="3" strokeLinecap="round" /><path d="M3 11 10 5" stroke="#333" strokeWidth="2.400" /><path d="M8.500 1.500Q7.500 5 10 6.500T14 3.500L12 4 10.800 3 11.500 1Z" fill="#222" /><path d="M1 2.500 6 7" stroke="#777" strokeWidth="1.600" /><circle cx="2.500" cy="11" r="2.200" fill="#222" /></svg>
      </div>
      <div className="relative ml-[23px] w-[930px]">
        <h2 className="flex h-[51px] items-center justify-center pt-[18px] pr-[3px] text-[12px] font-bold text-[#0a0a0a]">Sequence Diagram 'SNNNNNNNNN' For TEST2</h2>
        <div className="flex h-[361px] overflow-hidden rounded-[16px] shadow-[0_0_0_1px_#6fbcd6]">
          <Tree />
          <Splitter className="w-[13px]" />
          <Diagram />
          <Splitter className="w-3" />
          <ToolColumn />
        </div>
      </div>
    </div>
  );
}

/* ---------- taskbars ---------- */

const innerBtn = "border border-[#4b6079] bg-linear-to-br from-[#d3e0f0] to-[#a0b5d0] shadow-[inset_0_0_0_1px_#ffffff80]";
const innerItems = [
  ["w-[41px]", "", <Orb className="h-[26px] w-[26px] -translate-x-[3px]" />],
  ["w-[42px]", innerBtn, <Explorer className="h-6 w-6 -translate-x-px" />],
  ["w-[48px]", "", <svg viewBox="0 0 22 22" className="h-5 w-5"><rect x="5" y="2" width="15" height="17" fill="#a9cdec" stroke="#6da2d1" /><rect x="1" y="4" width="15" height="15" fill="#b9d9f2" stroke="#5d9bd0" /><circle cx="8.500" cy="11.500" r="6" fill="#ef7622" /><path d="M6.500 8V15L12.500 11.500Z" fill="#fff" /></svg>],
  ["w-[43px]", innerBtn, <IE className="h-[22px] w-[22px]" />],
  ["w-[45px]", "", <Eclipse className="h-[22px] w-[22px]" />],
  ["w-[45px]", "", <Palette className="h-[22px] w-[22px]" />],
  ["w-[46px]", "", <Firefox className="h-[22px] w-[22px]" />],
  ["w-[44.800px]", `${innerBtn} brightness-110`, <Chrome className="h-[21px] w-[21px]" />],
  ["w-[44.800px]", innerBtn, <svg viewBox="0 0 22 24" className="h-6 w-[22px]"><rect x="2" y="2" width="17" height="20" fill="#f5f5e8" stroke="#666" /><path d="M2 14H19V22H2Z" fill="#57ad27" /><text x="3.500" y="12.500" fontSize="8" fontWeight="700" fontFamily="Open Sans" fill="#222">n++</text><path d="M20 3 14 17" stroke="#e7a91f" strokeWidth="2.500" /></svg>],
  ["w-[44.800px]", innerBtn, <svg viewBox="0 0 24 22" className="h-5 w-[22px]"><path d="M2 2 12 0 14 12 4 14Z" fill="#b2dba9" /><path d="M6 5 16 3 18 14 8 16Z" fill="#9fcbe8" /><path d="M11 8 22 6 23 17 13 19Z" fill="#fbe37b" /></svg>],
  ["w-[44.800px]", innerBtn, <svg viewBox="0 0 24 24" className="h-[23px] w-[23px]"><rect width="24" height="24" fill="#2b1c3d" /><circle cx="12" cy="12" r="8.500" fill="none" stroke="#ddd" strokeWidth="2.500" strokeDasharray="2.500 1.500" /><rect y="7" width="24" height="10" fill="#2b1c3d" opacity=".6" /><text x="12" y="11.500" fontSize="6.200" fontWeight="700" textAnchor="middle" fontFamily="Open Sans" fill="#e2703a">Java EE</text><text x="12" y="18" fontSize="6.500" fontWeight="700" textAnchor="middle" fontFamily="Open Sans" fill="#e2703a">IDE</text></svg>],
  ["w-[44.800px]", innerBtn, <svg viewBox="0 0 24 24" className="h-[22px] w-[22px]"><path d="M2 2H9V4L6 6 8 10H3Z" fill="#3a7edc" /><path d="M8 10V7Q12 1 16 7V10" fill="none" stroke="#8a8f94" strokeWidth="2.200" /><rect x="7" y="10" width="11" height="9" fill="#6c7278" /><path d="M22 22H15L17 20 14 17 17 15 20 18 22 16Z" fill="#21a33b" /></svg>],
  ["w-[44.800px]", innerBtn, <span className="relative flex"><Outlook className="h-[22px] w-[22px]" /><svg viewBox="0 0 12 8" className="absolute right-0 -bottom-0.5 h-[7px] w-[11px]"><path d="M0 0H12V8H0Z" fill="#f4c288" /><path d="M0 0 6 5 12 0" fill="none" stroke="#c98f4c" /></svg></span>],
  ["w-[44.800px]", innerBtn, <Terminal className="h-[18px] w-[22px] -translate-x-[3px]" />],
  ["w-[44.800px]", innerBtn, <Office className="h-[22px] w-[22px] -translate-x-px" letter="W" color="#2a5699" />],
  ["w-[44.800px]", innerBtn, <Terminal className="h-[17px] w-[21px] -translate-x-0.5" fill="#454545" ink="#999" />],
  ["w-[44.800px]", innerBtn, <SkypeIcon className="h-[22px] w-[22px] -translate-x-0.5"><i className="absolute -right-0.5 -bottom-px h-2 w-2 rounded-full border border-white/70 bg-[#f6c136]" /></SkypeIcon>],
  ["w-[44px]", innerBtn, <svg viewBox="0 0 24 24" className="h-[22px] w-[22px]"><path d="M3 1 18 3V15L4 13Z" fill="#1235b8" stroke="#99a" /><path d="M3.500 1.500 12 3 6 13 4 12Z" fill="#4c7fe6" /><path d="M8 15H14L16 18H6Z" fill="#c7cbd0" /><circle cx="18" cy="17.500" r="5.500" fill="#dfe6df" stroke="#777" /><path d="M15.500 15.500 18 17.500 15.500 20M20.500 15 18 17.500" stroke="#4a8a47" fill="none" /></svg>],
];

const Flag = ({ className }) => (
  <svg viewBox="0 0 18 18" className={className}><path d="M3 2V16" stroke="#fff" strokeWidth="1.800" /><path d="M4 2.500C7 1 9 4 14 3V10C9 11 7 8 4 9.500Z" fill="#e9eef4" stroke="#fff" strokeWidth=".8" /><circle cx="12" cy="12.500" r="4.800" fill="#d5322b" /><path d="M10 10.500 14 14.500M14 10.500 10 14.500" stroke="#fff" strokeWidth="1.600" /></svg>
);
const Speaker = ({ className }) => (
  <svg viewBox="0 0 18 18" className={className} fill="none" stroke="#fff" strokeWidth="1.300"><path d="M2 6.500H4.500L8.500 3V15L4.500 11.500H2Z" fill="#dfe6ee" /><path d="M11 6.500Q12.500 9 11 11.500M13 5Q15.300 9 13 13M15 3.500Q18 9 15 14.500" strokeWidth="1" /></svg>
);
const Net = ({ className }) => (
  <svg viewBox="0 0 18 18" className={className} fill="none" stroke="#fff" strokeWidth="1.400"><path d="M7 5H16.500V13H5V9M8 16H15M12 13V16M1.500 2V5Q1.500 7 3.500 7T5.500 5V2M.500 2.500H6.500M3.500 7V10H5" /></svg>
);
const UpTri = ({ className }) => <svg viewBox="0 0 8 5" className={className}><path d="M4 0 8 5H0Z" fill="#f3f6fa" /></svg>;

function InnerTaskbar() {
  return (
    <div className="flex h-7 border-t border-[#5c6f86] bg-linear-to-r from-[#6e84a2] via-[#a4b9d6] via-10% to-[#a4b9d6]">
      {innerItems.map(([w, cls, icon], i) => (
        <div key={i} className={`flex shrink-0 items-center justify-center ${w}`}>
          <div className={`flex h-full flex-1 items-center justify-center rounded-xs ${cls} ${cls ? "mr-0.5" : ""}`}>{icon}</div>
        </div>
      ))}
      <div className="flex flex-1 items-center bg-linear-to-r from-[#a4b9d6] to-[#64768f] to-35% pl-[54px] text-[8px] leading-[12px] text-white">
        <UpTri className="h-1 w-1.5" />
        <Flag className="ml-2 h-3.5 w-3.5" />
        <Speaker className="ml-1 h-3 w-3" />
        <Net className="ml-1.5 h-3 w-3" />
        <span className="ml-auto pr-[9px] text-center">7:25 PM<br />1/3/2019</span>
        <i className="h-full w-2.5 border-l border-[#3d4c60] bg-[#62748d]" />
      </div>
    </div>
  );
}

const outerItems = [
  [<Atom className="h-8 w-8" />], [<Sublime className="h-8 w-8" />], [<Outlook className="h-[31px] w-[31px]" />, "stack"],
  [<Explorer className="h-8 w-8" />],
  [<SkypeIcon className="h-8 w-8"><svg viewBox="0 0 12 12" className="absolute -right-0.5 -bottom-px h-3 w-3"><circle cx="6" cy="6" r="5.500" fill="#6ab42d" stroke="#e4f2d8" strokeWidth=".6" /><path d="M3.500 6 5.500 8 9 4.500" fill="none" stroke="#fff" strokeWidth="1.300" /></svg></SkypeIcon>, "stack"],
  [<Chrome className="h-[31px] w-[31px]" />],
  [<Putty className="h-8 w-8" />], [<Office className="h-[31px] w-[31px]" letter="P" color="#d24625" />],
  [<Office className="h-[31px] w-[31px]" letter="W" color="#2a5699" />, "stack"], [<Opera className="h-[31px] w-[31px]" />],
  [<Webex className="h-[27px] w-[27px]" />, "active"], [<Palette className="h-8 w-8" />],
];

function OuterTaskbar() {
  return (
    <footer className="flex h-10 border-t border-[#3f4b5a] bg-linear-to-r from-[#8d9fb5] via-[#a6bfdc] via-9% to-[#a6bfdc]">
      <div className="flex w-[54px] justify-center pt-px"><Orb className="h-[37px] w-[37px]" /></div>
      <div className="flex w-[67px] items-center justify-center"><IE className="h-8 w-8 translate-x-0.5" /></div>
      {outerItems.map(([icon, kind], i) => (
        <div key={i} className="flex w-[62px] gap-px pr-[3px]">
          <div className={`flex flex-1 items-center justify-center rounded-[3px] border border-[#52647b] shadow-[inset_0_0_0_1px_#ffffffa0] ${kind === "active" ? "bg-linear-to-b from-[#f3f8fd] to-[#dde9f5]" : "bg-linear-to-br from-[#d5e1ef] to-[#a9bfdb]"}`}>{icon}</div>
          {kind === "stack" && <><i className="w-[3px] rounded-r border border-l-0 border-[#6a7d95] bg-[#c6d5e8]" /><i className="w-[3px] rounded-r border border-l-0 border-[#6a7d95] bg-[#c6d5e8]" /></>}
        </div>
      ))}
      <div className="ml-auto flex w-[206px] items-center bg-linear-to-r from-[#a6bfdc] to-[#8194aa] to-15% pl-7 text-[11.200px] leading-[17px] text-white">
        <UpTri className="h-[5px] w-2" />
        <Flag className="ml-3 h-[18px] w-[18px]" />
        <Net className="ml-1.5 h-4 w-4" />
        <Speaker className="ml-2 h-4 w-4" />
        <span className="ml-auto pr-[13px] text-center">7:25 PM<br />1/3/2019</span>
        <i className="h-full w-3.5 border border-[#38475a] bg-linear-to-b from-[#8295ab] to-[#56687f]" />
      </div>
    </footer>
  );
}

/* ---------- side panel ---------- */

const people = [
  { init: "AA", color: "text-[#f7793f]", icon: "headset", name: "Aravind Aytha", note: "(me)", gap: "ml-2", me: true },
  { init: "RG", color: "text-[#43b39e]", icon: "phone", name: "Ravi Kumar Gopalakrishnan", note: "(Host, internal)", gap: "ml-2.5" },
  { init: "S", color: "text-[#3ba8dc]", icon: "phone", name: "Saifulla", badge: true },
  { init: "AK", color: "text-[#fa7267]", icon: "headset", name: "Ashok Kumar Koleti", note: "(internal)", gap: "ml-[11px]" },
  { icon: "phone", name: "Call-in User_3 (67****)", tight: true },
];

const PanelHead = ({ children, className }) => (
  <div className={`mr-px ml-[3px] flex shrink-0 items-center bg-[#fafafa] pr-2 pl-[7px] text-[13px] text-[#666] ${className}`}>
    <ChevronDown className="h-3.5 w-3.5 -translate-x-px" strokeWidth={1.700} />
    <span className="flex-1 pl-1">{children}</span>
    <X className="h-3.5 w-3.5 translate-x-px -translate-y-px text-[#444]" strokeWidth={1.600} />
  </div>
);

function SidePanel() {
  return (
    <aside className="flex w-[379px] flex-col bg-white text-[11.400px] text-[#2b2b2b]">
      <PanelHead className="h-9 pt-0.5">Participants</PanelHead>
      <ul className="h-[386px]">
        {people.map((p) => (
          <li key={p.name} className="flex h-10 items-center pl-[19px]">
            <span className={`relative flex h-7 w-7 items-center justify-center rounded-full bg-[#f4f4f4] text-[13px] ${p.color || ""}`}>
              {p.init || <PhoneSolid className="h-3.5 w-[11px]" />}
              {p.badge && <Webex className="absolute -right-px -bottom-px h-3 w-3" />}
            </span>
            {p.icon === "phone" ? <PhoneLine className="mx-[11px] h-[13px] w-[13px] text-[#444]" /> : <Headset className="mr-3 ml-2.5 h-[13px] w-[13px] text-[#444]" />}
            <span className={`pl-0.5 whitespace-pre ${p.tight ? "tracking-[-0.25px]" : "tracking-[-0.080px]"}`}>{p.name}</span>
            {p.note && <span className={`text-[#999] ${p.gap}`}>{p.note}</span>}
            {p.me && (
              <span className="ml-auto flex gap-14 pr-[9px]">
                <span className="flex h-7 w-7 items-center justify-center rounded-full bg-[#e4e4e4]"><Palm className="h-3.5 w-3.5 text-[#222]" /></span>
                <span className="flex h-7 w-7 items-center justify-center rounded-full bg-[#f6493f]"><MicOff className="h-3 w-[9px] text-white" w={1.600} /></span>
              </span>
            )}
          </li>
        ))}
      </ul>
      <PanelHead className="h-[35px] pt-px">Chat</PanelHead>
      <div className="flex h-[125px] flex-col pt-px pl-[9px]">
        <div className="flex justify-between pr-6 text-[11.300px] leading-[17px] text-[#999]"><span>to Ravi Kumar Gopalakrishnan (internal) (privately):</span><span>6:45 PM</span></div>
        <div className="text-[13px] leading-[18px] text-[#333]">Hi Ravi</div>
      </div>
      <div className="flex h-[27px] items-center pr-1.5 pl-[13px]">
        <span className="w-[27px] text-[#222]">To:</span>
        <span className="flex h-[27px] flex-1 items-center justify-between rounded border border-[#ccc] pt-px pr-[6px] pl-[7px] text-[11.300px] text-[#555]">
          Ravi Kumar Gopalakrishnan (Host, internal)
          <ChevronDown className="h-3 w-3 text-[#666]" strokeWidth={1.800} />
        </span>
      </div>
      <div className="pt-3.5 pl-[21px] text-[13px] text-[#b9b9b9]">Enter chat message here</div>
    </aside>
  );
}

export default function App() {
  return (
    <div className="relative flex h-[768px] w-[1366px] flex-col overflow-hidden bg-[#262626] font-['Open_Sans','Noto_Sans',sans-serif]">
      <TitleBar />
      <main className="flex h-[671px]">
        <section className="w-[987px]">
          <VideoStrip />
          <div className="relative mt-[13px] h-[555px] border border-l-2 border-[#7ab80e]">
            <TabStrip />
            <BrowserBars />
            <Modeller />
            <InnerTaskbar />
            <div className="absolute top-[498px] left-[465px] flex h-[52px] w-[52px] items-center justify-center rounded-full border border-[#ee4e47] bg-[#f08080]/15">
              <MicOff className="h-[22px] w-[17px] text-[#ee4e47]" w={0.8} />
            </div>
            <svg viewBox="0 0 52 52" className="absolute top-[472px] left-[903px] h-[52px] w-[52px]">
              <circle cx="26" cy="26" r="26" fill="#4d6f82" opacity=".8" />
              <path d="M7 42A26 26 0 0 1 43 6L37 14 14 38Z" fill="#36809f" opacity=".75" />
              <circle cx="26" cy="26" r="16.500" fill="#8fa5b4" />
              <path d="M37 13.500A16.500 16.500 0 1 1 11 33.500C28 37 38 27 37 13.500Z" fill="#75a08b" />
            </svg>
          </div>
        </section>
        <SidePanel />
      </main>
      <OuterTaskbar />
    </div>
  );
}
